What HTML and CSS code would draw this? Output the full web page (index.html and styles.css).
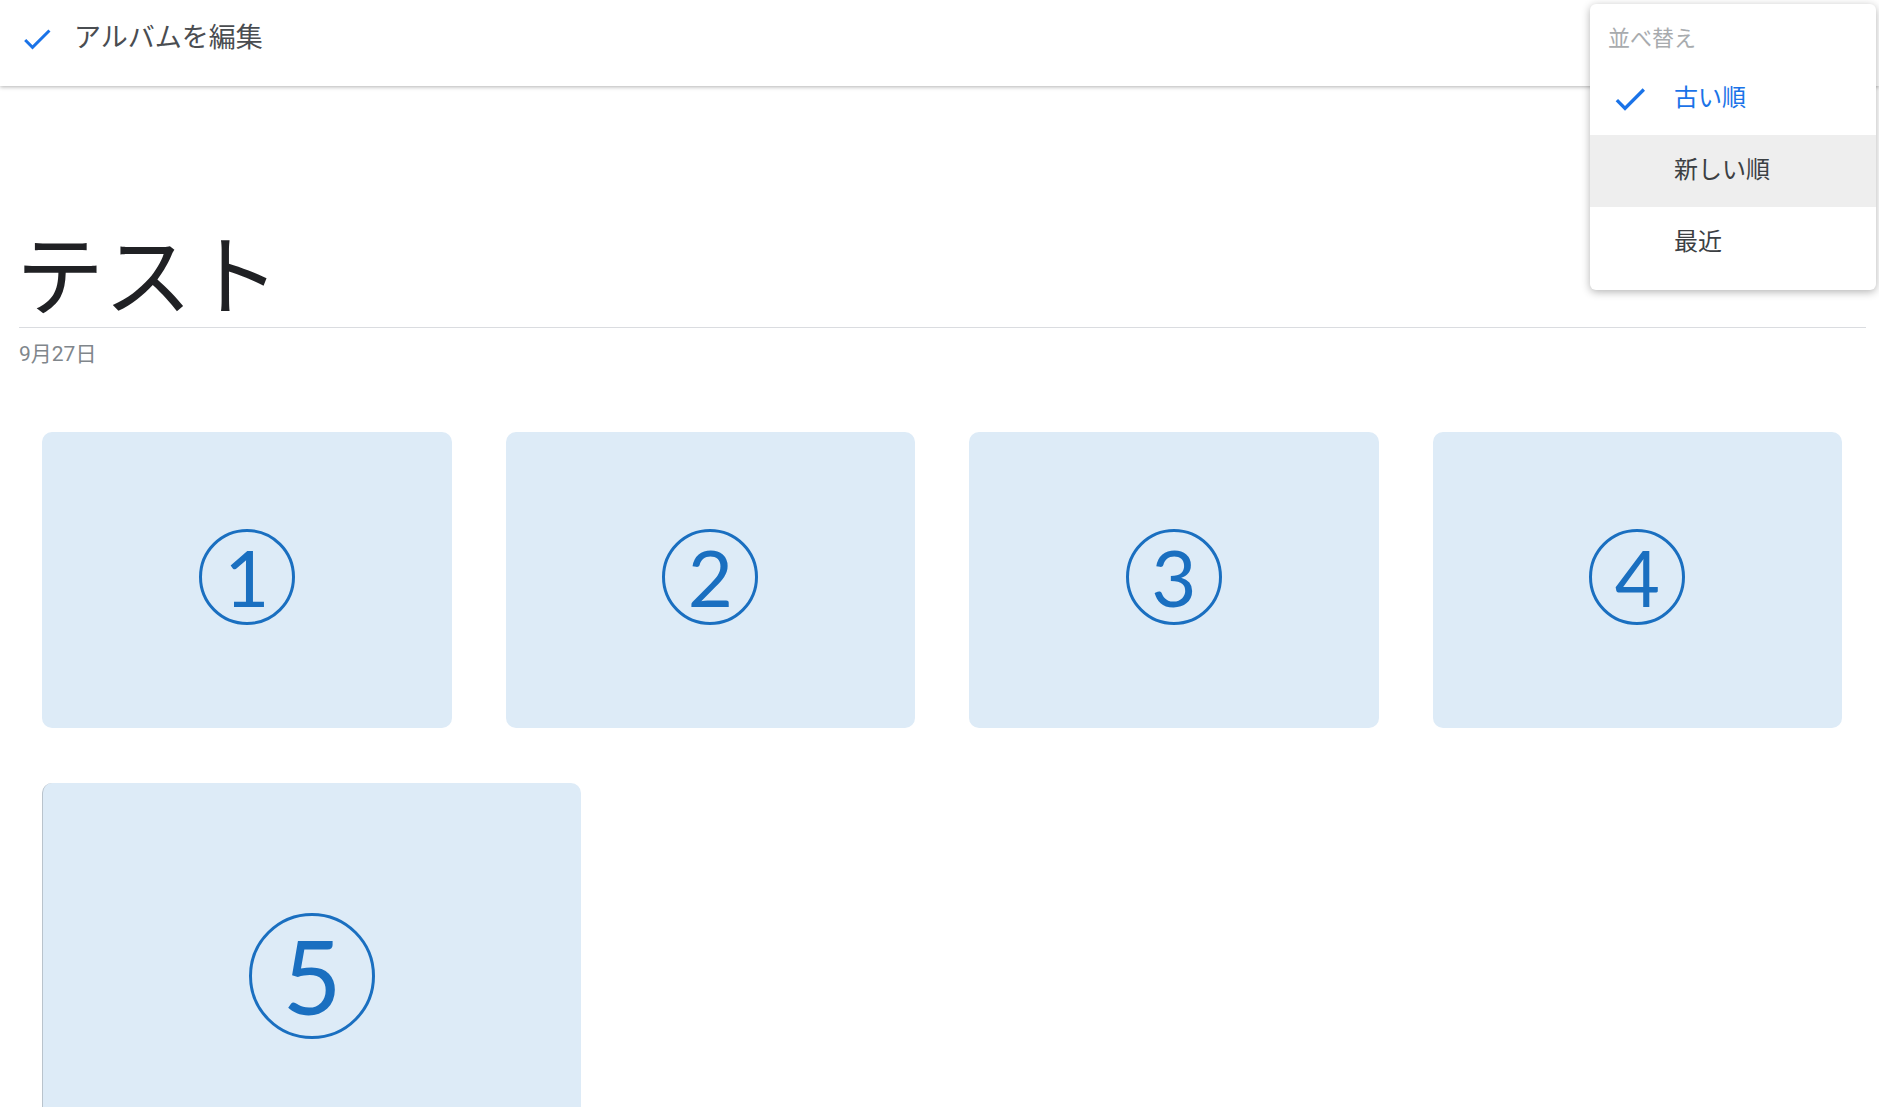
FILE: index.html
```html
<!DOCTYPE html>
<html lang="ja">
<head>
    <meta charset="UTF-8">
    <meta name="viewport" content="width=device-width, initial-scale=1.0">
    <title>テスト - アルバム</title>
    <link rel="stylesheet" href="styles.css">
</head>
<body>

    <header class="topbar">
        <button class="done-button" aria-label="完了">
            <svg class="check-icon" viewBox="0 0 24 24"><path d="M9 16.17L4.83 12l-1.42 1.41L9 19 21 7l-1.41-1.41z"/></svg>
        </button>
        <span class="topbar-title">アルバムを編集</span>
    </header>

    <!-- ▼ 並べ替えメニュー ▼ -->
    <div class="sort-menu">
        <div class="sort-menu-header">並べ替え</div>
        <div class="sort-item selected">
            <svg class="check-icon" viewBox="0 0 24 24"><path d="M9 16.17L4.83 12l-1.42 1.41L9 19 21 7l-1.41-1.41z"/></svg>
            <span class="label">古い順</span>
        </div>
        <div class="sort-item hover">
            <span class="icon-space"></span>
            <span class="label">新しい順</span>
        </div>
        <div class="sort-item">
            <span class="icon-space"></span>
            <span class="label">最近</span>
        </div>
    </div>
    <!-- ▲ 並べ替えメニュー ▲ -->

    <main class="album">
        <h1 class="album-title">テスト</h1>
        <p class="album-date">9月27日</p>

        <div class="photo-row">
            <div class="photo"><span class="num">1</span></div>
            <div class="photo"><span class="num">2</span></div>
            <div class="photo"><span class="num">3</span></div>
            <div class="photo"><span class="num">4</span></div>
        </div>
        <div class="photo-row">
            <div class="photo large"><span class="num">5</span></div>
        </div>
    </main>

</body>
</html>
```

FILE: styles.css
```css
body {
    margin: 0;
    padding: 0;
    font-family: Roboto, "Noto Sans CJK JP", sans-serif;
    background: #fff;
    color: #202124;
}

.topbar {
    height: 86px;
    box-sizing: border-box;
    padding: 0 0 8px 19px;
    display: flex;
    align-items: center;
    background: #fff;
    box-shadow: 0 1px 4px rgba(0, 0, 0, 0.3);
}

.done-button {
    width: 36px;
    height: 36px;
    padding: 0;
    border: none;
    background: none;
    margin-right: 19px;
}

.done-button .check-icon {
    width: 36px;
    height: 36px;
}

.check-icon {
    fill: #1a73e8;
    display: block;
}

.topbar-title {
    font-size: 27px;
    color: #4a4d51;
    margin-bottom: 8px;
}

.sort-menu {
    position: absolute;
    top: 4px;
    right: 3px;
    width: 286px;
    padding-bottom: 11px;
    background: #fff;
    border-radius: 6px;
    box-shadow: 0 2px 8px rgba(0, 0, 0, 0.3);
    z-index: 10;
}

.sort-menu-header {
    padding: 19px 0 8px 18px;
    line-height: 32px;
    font-size: 22px;
    color: #a8abae;
}

.sort-item {
    height: 72px;
    display: flex;
    align-items: center;
    padding-left: 20px;
    font-size: 24px;
    color: #3c4043;
}

.sort-item .label {
    margin-bottom: 7px;
}

.sort-item .check-icon,
.sort-item .icon-space {
    width: 40px;
    height: 40px;
    margin-right: 24px;
}

.sort-item.selected {
    color: #1a73e8;
}

.sort-item.hover {
    background: #eeeeee;
}

.album {
    padding: 0 13px 0 19px;
}

.album-title {
    margin: 148px 0 0;
    padding-bottom: 5px;
    text-indent: -3px;
    font-size: 88px;
    font-weight: normal;
    line-height: 1;
    border-bottom: 1px solid #dadce0;
}

.album-date {
    margin: 13px 0 0;
    font-size: 21px;
    line-height: 26px;
    color: #80868b;
}

.photo-row {
    display: flex;
    gap: 54px;
    margin: 0 24px 0 23px;
}

.photo-row:first-of-type {
    margin-top: 65px;
}

.photo-row + .photo-row {
    margin-top: 55px;
}

.photo {
    flex: 1;
    height: 296px;
    background: #ddebf7;
    border-radius: 10px;
    display: flex;
    align-items: center;
    justify-content: center;
}

.photo.large {
    flex: 0 0 539px;
    height: 392px;
    border-left: 1px solid #b9c3cc;
    box-sizing: border-box;
}

.num {
    width: 90px;
    height: 90px;
    border: 3px solid #1a6fc0;
    border-radius: 50%;
    display: flex;
    align-items: center;
    justify-content: center;
    font-family: Lato, sans-serif;
    font-size: 78px;
    line-height: 1;
    color: #1a6fc0;
    margin-top: -6px;
}

.large .num {
    width: 120px;
    height: 120px;
    border-width: 3px;
    font-size: 102px;
}
```
